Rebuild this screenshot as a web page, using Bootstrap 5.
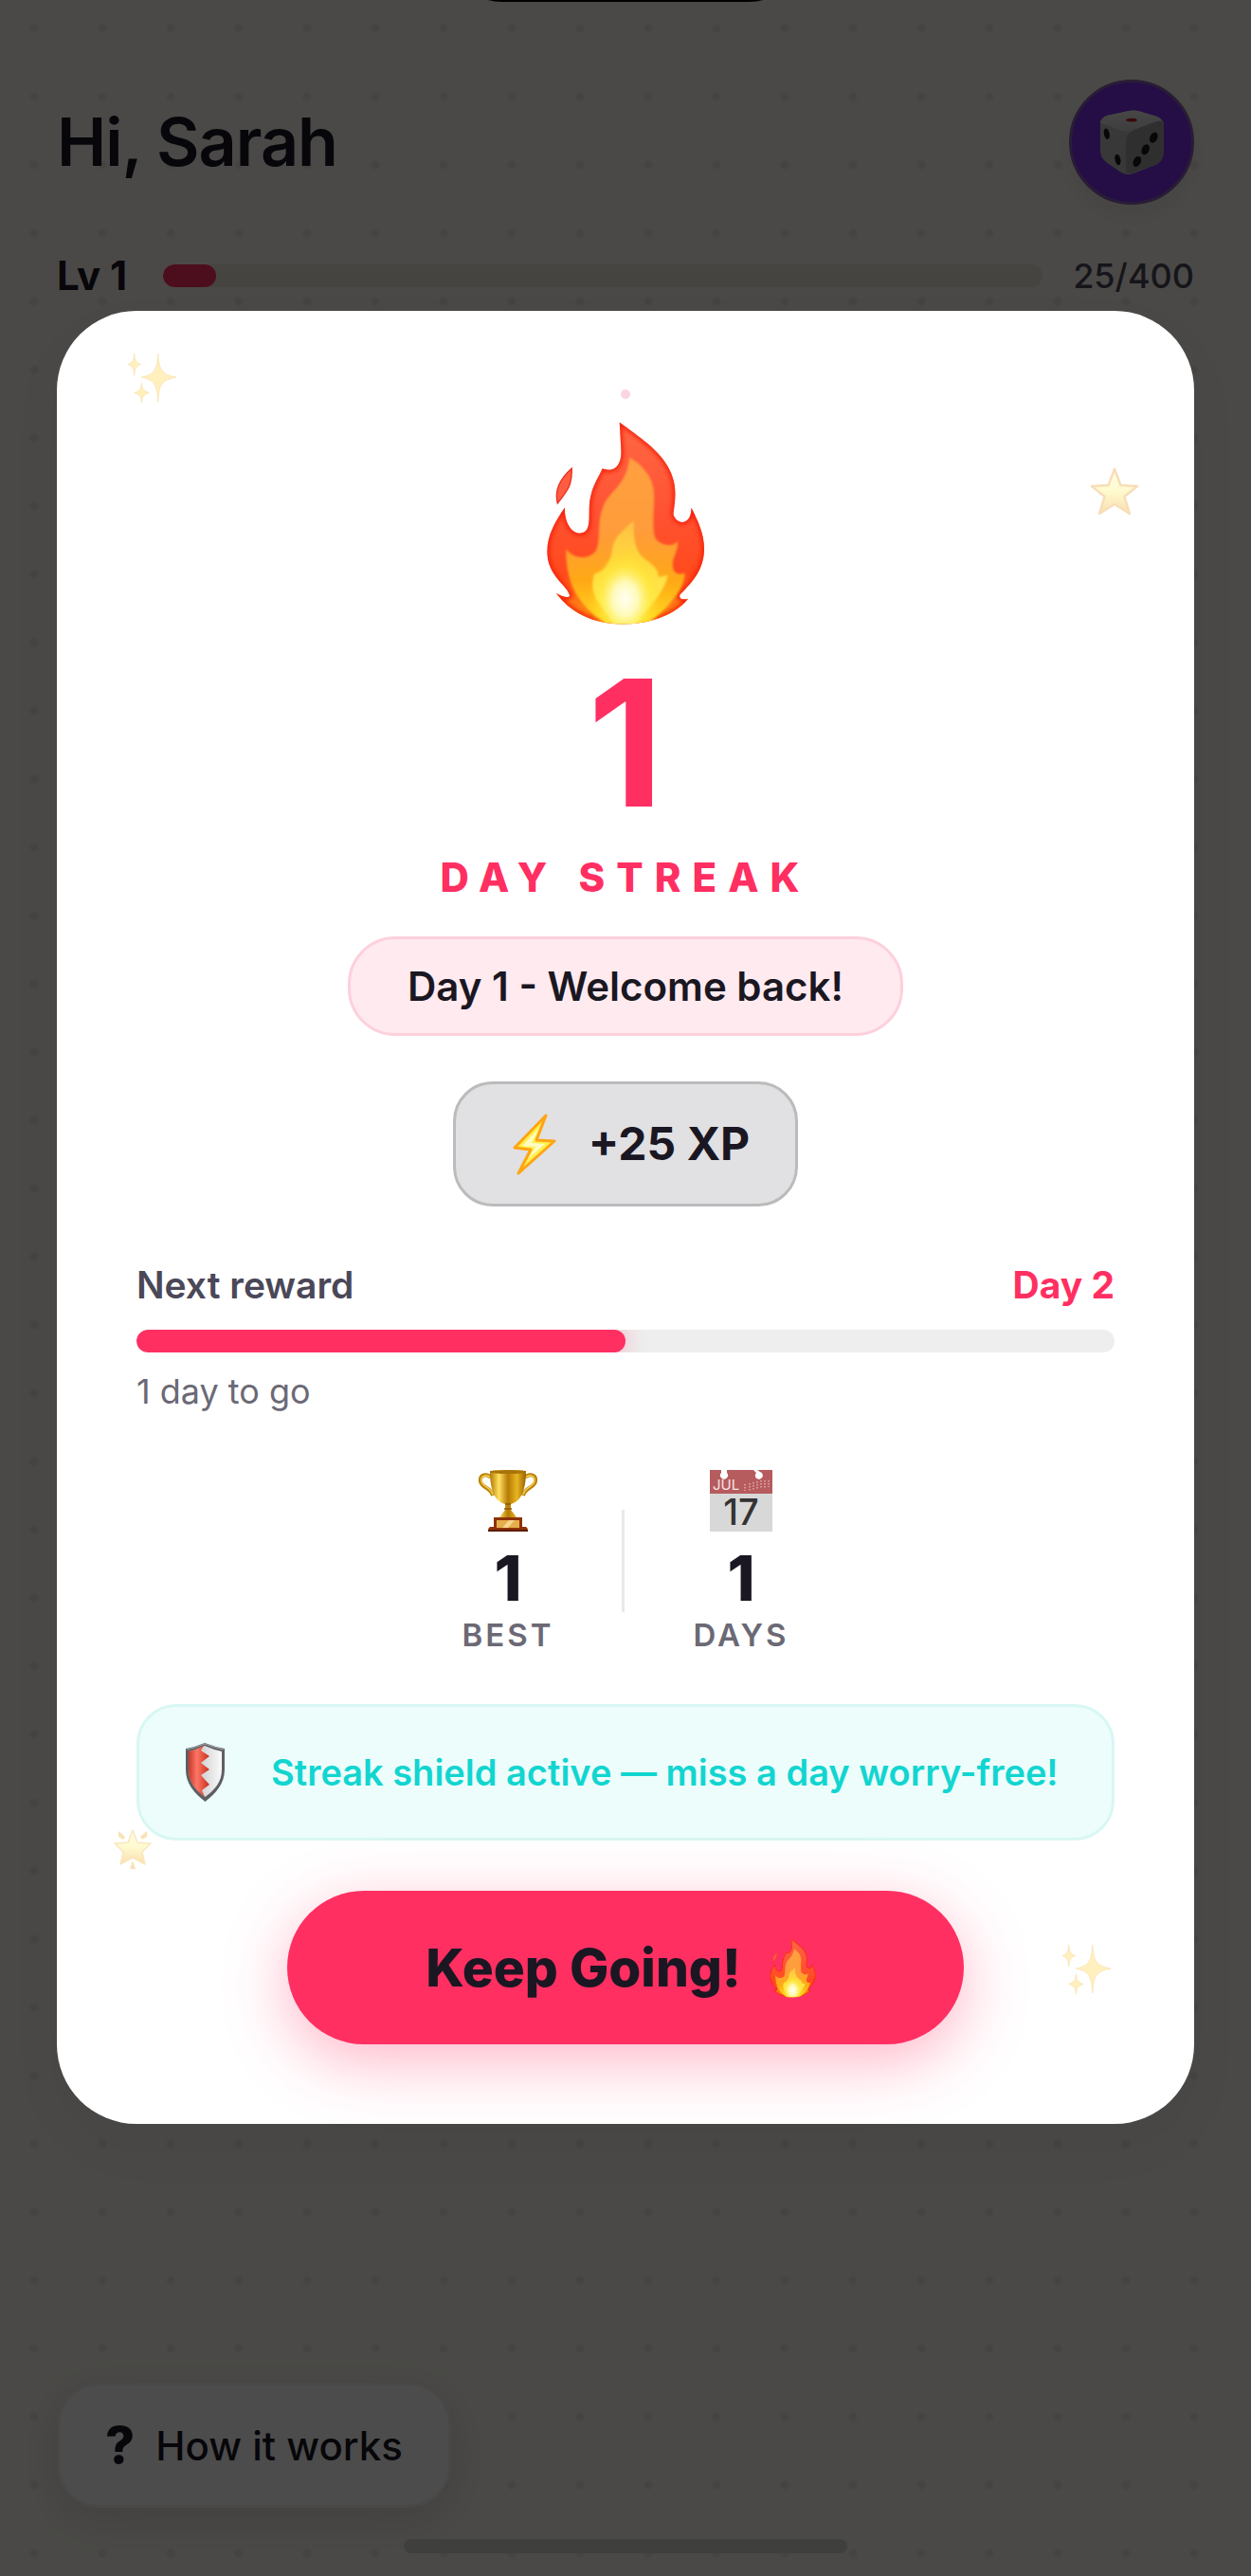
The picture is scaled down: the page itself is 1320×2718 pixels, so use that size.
<!DOCTYPE html>
<html lang="en">
<head>
<meta charset="utf-8">
<meta name="viewport" content="width=device-width, initial-scale=1">
<title>Daily streak</title>
<link rel="stylesheet" href="https://cdn.jsdelivr.net/npm/bootstrap@5.3.0/dist/css/bootstrap.min.css">
<style>
  :root { --ink: #1a1722; --hot: #ff2f62; --muted-ink: #6b6975; }
  body { font-family: Inter, "Liberation Sans", sans-serif; color: var(--ink); background: #f8f5ee; }
  .stack { display: grid; min-height: 100vh; position: relative; overflow: hidden; }
  .stack > .layer { grid-area: 1 / 1; min-width: 0; }

  /* Home screen */
  .home { padding: 84px 60px 72px; background: radial-gradient(circle at 36px 36px, #e9e5de 3px, transparent 6px) 0 -6px / 72px 72px; }
  .hello { font-size: 70px; line-height: 84px; font-weight: 600; letter-spacing: -1px; }
  .avatar-btn { width: 132px; height: 132px; background: #7c2fe6; border: 3px solid #8a62b4; box-shadow: 0 12px 24px rgba(0,0,0,.06); }
  .avatar-btn svg { width: 70px; height: 70px; }
  .level-row { gap: 32px; margin-top: 51px; line-height: 48px; }
  .level-name { font-size: 42px; font-weight: 700; min-width: 80px; }
  .level-xp { font-size: 36px; font-weight: 500; color: #4a4858; }
  .bar { height: 24px; border-radius: 12px; background: #eee; }
  .bar .progress-bar { border-radius: 12px; background: var(--hot); box-shadow: 0 0 24px rgba(255,47,98,.4); overflow: visible; }
  .level-row .bar { background: #ebe4d8; }
  .level-row .progress-bar { box-shadow: none; }
  .help-btn { gap: 22px; height: 132px; padding: 0 48px; border: 3px solid #f4f1ec; border-radius: 45px; background: #fff; color: var(--ink); font-size: 42px; font-weight: 500; box-shadow: 0 12px 48px rgba(0,0,0,.13); }
  .help-mark { font-size: 54px; font-weight: 800; line-height: 60px; }

  /* Dialog */
  .veil { background: rgba(0,0,0,.7); padding: 328px 60px 84px; }
  .streak-card { position: relative; background: #fff; border-radius: 84px; padding: 116px 84px 84px; box-shadow: 0 24px 60px rgba(0,0,0,.04); }
  .ember { width: 10px; height: 10px; background: #fad5e0; top: 83px; left: 50%; translate: -50%; }
  .hero-flame { width: 168px; height: 216px; }
  .streak-num { font-size: 186px; line-height: 192px; font-weight: 700; color: var(--hot); margin-top: 28px; }
  .streak-label { font-size: 42px; line-height: 48px; font-weight: 800; letter-spacing: 12px; color: var(--hot); margin-top: 22px; }
  .pill-msg { padding: 24px 60px; line-height: 51px; font-size: 42px; font-weight: 600; background: #ffeaef; border: 3px solid #fdd0dc; border-radius: 50px; margin-top: 38px; }
  .pill-xp { gap: 24px; padding: 0 48px; height: 132px; font-size: 48px; font-weight: 700; background: #e1e0e3; border: 3px solid #bbb; border-radius: 42px; margin-top: 48px; }
  .pill-xp svg { width: 68px; height: 68px; }
  .reward { margin-top: 59px; }
  .reward-head { font-size: 39px; line-height: 48px; font-weight: 600; color: #4a4858; }
  .reward-day { font-weight: 700; color: var(--hot); }
  .reward .bar { margin: 23px 0 20px; }
  .reward-note { font-size: 36px; line-height: 42px; color: var(--muted-ink); }
  .stats { gap: 72px; margin-top: 61px; }
  .stats .rule { width: 3px; height: 108px; background: #e9e9eb; }
  .stat svg { width: 66px; height: 66px; }
  .stat-num { font-size: 66px; line-height: 72px; font-weight: 800; margin-top: 13px; }
  .stat-name { font-size: 33px; line-height: 36px; font-weight: 600; letter-spacing: 3px; color: var(--muted-ink); margin-top: 6px; }
  .shield-note { gap: 48px; height: 144px; padding: 0 24px 0 48px; background: #edfdfc; border: 3px solid #d8f7f3; border-radius: 42px; color: #12d5d0; font-size: 38px; font-weight: 600; margin-top: 55px; }
  .shield-note svg { flex: none; width: 43px; height: 64px; }
  .go-btn { gap: 30px; height: 162px; padding: 0 156px 0 146px; border: 0; border-radius: 81px; background: var(--hot); color: var(--ink); font-size: 55px; font-weight: 800; margin-top: 53px; box-shadow: 0 18px 66px rgba(255,47,98,.35); }
  .go-btn svg { width: 49px; height: 63px; }
  .go-btn:hover, .go-btn:focus { background: #f0265a; color: var(--ink); }

  /* Decorations floating over the dialog */
  .twinkle { position: absolute; opacity: .36; }
  .tw-a { left: 74px; top: 44px; width: 54px; height: 54px; }
  .tw-b { right: 57px; top: 164px; width: 54px; height: 54px; }
  .tw-c { left: 59px; bottom: 268px; width: 42px; height: 44px; }
  .tw-d { right: 86px; bottom: 136px; width: 54px; height: 54px; }

  /* Device chrome */
  .island { width: 372px; height: 111px; top: -109px; left: 50%; translate: -50%; border-radius: 56px; }
  .home-bar { width: 468px; height: 15px; bottom: 24px; left: 50%; translate: -50%; border-radius: 8px; background: #3f3f3e; }
</style>
</head>
<body>
<svg class="position-absolute" width="0" height="0" aria-hidden="true">
  <defs>
    <linearGradient id="fOut" x1="0" y1="0" x2="0" y2="1"><stop offset="0" stop-color="#ff6844"/><stop offset=".45" stop-color="#ff5233"/><stop offset=".75" stop-color="#ff4a1c"/><stop offset="1" stop-color="#ff9a12"/></linearGradient>
    <linearGradient id="fMid" x1="0" y1="0" x2="0" y2="1"><stop offset="0" stop-color="#ffa040"/><stop offset=".45" stop-color="#ff9c3a"/><stop offset=".75" stop-color="#ffa916"/><stop offset="1" stop-color="#ffdc20"/></linearGradient>
    <linearGradient id="fIn" x1="0" y1="0" x2="0" y2="1"><stop offset="0" stop-color="#ffbe45"/><stop offset=".4" stop-color="#ffda3c"/><stop offset="1" stop-color="#fff25a"/></linearGradient>
    <radialGradient id="fGlow"><stop offset="0" stop-color="#fffff4"/><stop offset=".35" stop-color="#fffbc0" stop-opacity=".95"/><stop offset=".7" stop-color="#ffec40" stop-opacity=".5"/><stop offset="1" stop-color="#ffd820" stop-opacity="0"/></radialGradient>
    <filter id="soft" x="-10%" y="-10%" width="120%" height="120%"><feGaussianBlur stdDeviation="7"/></filter>
    <filter id="soft2" x="-10%" y="-10%" width="120%" height="120%"><feGaussianBlur stdDeviation="3"/></filter>
    <path id="fShape" d="M342 163C405 210 470 252 500 312C528 366 518 415 513 455C520 490 572 495 570 434C590 475 611 515 611 565C611 630 575 670 535 710C528 722 540 730 560 724C525 770 450 802 360 805C250 805 185 765 140 706C160 718 178 722 184 716C178 680 113 655 112 575C112 520 140 475 168 434C166 480 190 518 218 516C260 512 238 450 250 400C258 360 275 340 288 310C325 325 350 300 347 250Z"/>
    <clipPath id="fClip"><use href="#fShape"/></clipPath>
    <linearGradient id="gold"><stop offset="0" stop-color="#b47800"/><stop offset=".25" stop-color="#ffe060"/><stop offset=".5" stop-color="#b57a05"/><stop offset=".75" stop-color="#e8b520"/><stop offset="1" stop-color="#9a6200"/></linearGradient>
    <linearGradient id="starFill" x1="0" y1="0" x2="0" y2="1"><stop offset="0" stop-color="#fff6c0"/><stop offset=".5" stop-color="#fff37a"/><stop offset="1" stop-color="#f0a528"/></linearGradient>
    <linearGradient id="steel"><stop offset="0" stop-color="#b9b9bd"/><stop offset="1" stop-color="#fafafa"/></linearGradient>
    <linearGradient id="redEn"><stop offset="0" stop-color="#c93a2c"/><stop offset=".4" stop-color="#ff7565"/><stop offset="1" stop-color="#c4301c"/></linearGradient>
    <linearGradient id="dieTop" x1="0" y1="0" x2="0" y2="1"><stop offset="0" stop-color="#ededed"/><stop offset="1" stop-color="#cfcfcf"/></linearGradient>
  </defs>
  <symbol id="flame" viewBox="108 160 506 648">
    <use href="#fShape" fill="url(#fOut)"/>
    <path d="M190 310C192 362 178 380 145 421C136 385 145 350 190 310Z" fill="#ff5c40" stroke="#e93020" stroke-width="4"/>
    <g clip-path="url(#fClip)">
      <use href="#fShape" fill="none" stroke="#f4200a" stroke-width="14" filter="url(#soft)"/>
      <path filter="url(#soft2)" d="M374 275C430 310 452 350 452 400C452 440 445 500 455 530C475 560 520 560 527 538C530 580 500 600 515 635C525 650 545 645 550 642C548 700 480 770 430 802L300 802C215 750 170 680 172 565C190 595 245 605 268 570C285 530 265 470 300 410C330 370 366 350 374 275Z" fill="url(#fMid)"/>
      <path filter="url(#soft2)" d="M388 475C385 540 392 575 425 600C450 618 468 635 465 655C480 652 492 650 495 648C490 700 425 760 395 805H325C290 750 240 715 262 645C290 640 305 620 318 580C320 530 350 510 388 475Z" fill="url(#fIn)"/>
      <ellipse cx="360" cy="725" rx="115" ry="150" fill="url(#fGlow)"/>
    </g>
  </symbol>
  <symbol id="sparkles" viewBox="0 0 56 56">
    <g fill="#ffd84e" stroke="#f3b63c" stroke-width="1">
      <path d="M34 1C35 19 38 24 54 27C38 30 35 35 34 54C33 35 30 30 16 27C30 24 33 19 34 1Z"/>
      <path d="M8 1C8.500 9 10 11 15 13C10 15 8.500 17 8 25C7.500 17 6 15 1 13C6 11 7.500 9 8 1Z"/>
      <path d="M16 33C16.500 40 18 42 24 44C18 46 16.500 48 16 55C15.500 48 14 46 8 44C14 42 15.500 40 16 33Z"/>
    </g>
  </symbol>
  <symbol id="star" viewBox="0 0 54 54"><path d="M27 3L33.500 20L51 21L37.500 32L43 50L27 40L11 50L16.500 32L3 21L20.500 20Z" fill="url(#starFill)" stroke="#e8a63c" stroke-width="2.500" stroke-linejoin="round"/></symbol>
  <symbol id="glowstar" viewBox="0 0 42 44">
    <path d="M21 2L26 15L40 16L31 25L34 38L21 31L8 38L11 25L2 16L16 15Z" fill="url(#starFill)" stroke="#f0bd4c" stroke-width="1.500" stroke-linejoin="round"/>
    <path d="M6 3L13 9L11 12L6 9ZM36 3L29 9L31 12L36 9ZM21 34L24 43H18Z" fill="#f0b030"/>
  </symbol>
</svg>

<div class="stack">
  <main class="layer home d-flex flex-column">
    <header>
      <div class="d-flex justify-content-between align-items-center">
        <h1 class="hello m-0">Hi, Sarah</h1>
        <button type="button" class="avatar-btn rounded-circle d-flex align-items-center justify-content-center p-0" aria-label="Profile">
          <svg viewBox="0 0 72 72" aria-hidden="true">
            <path d="M2 17Q2 9 10 7L33 2Q38 1 43 2L63 8Q71 11 71 17V46Q71 54 64 60L38 70Q30 73 23 68L9 58Q2 53 2 45Z" fill="#bcbcbc"/>
            <path d="M2 15Q3 9 10 7L33 2Q38 1 43 2L63 8Q70 11 68 14L39 23Q31 26 23 23Z" fill="url(#dieTop)"/>
            <path d="M30 35Q30 26 40 22L64 13Q71 12 71 18V46Q71 54 64 60L38 69Q30 72 30 65Z" fill="#9d9d9d"/>
            <ellipse cx="36" cy="12" rx="6" ry="2" fill="#c11c28"/>
            <g fill="#191919"><ellipse cx="9" cy="27" rx="3" ry="6" transform="rotate(-12 9 27)"/><ellipse cx="21" cy="55" rx="3" ry="6" transform="rotate(-12 21 55)"/><ellipse cx="60" cy="31" rx="4" ry="6" transform="rotate(25 60 31)"/><ellipse cx="51" cy="44" rx="4" ry="6" transform="rotate(25 51 44)"/><ellipse cx="42" cy="57" rx="4" ry="6" transform="rotate(25 42 57)"/></g>
          </svg>
        </button>
      </div>
      <div class="level-row d-flex align-items-center">
        <span class="level-name">Lv 1</span>
        <div class="progress bar flex-grow-1" role="progressbar" aria-label="Experience" aria-valuenow="25" aria-valuemin="0" aria-valuemax="400">
          <div class="progress-bar" style="width: 6%"></div>
        </div>
        <span class="level-xp">25/400</span>
      </div>
    </header>
    <footer class="mt-auto">
      <button type="button" class="help-btn d-inline-flex align-items-center">
        <span class="help-mark">?</span><span>How it works</span>
      </button>
    </footer>
  </main>

  <div class="layer veil">
    <section class="streak-card d-flex flex-column align-items-center" role="dialog" aria-modal="true" aria-labelledby="streak-title">
      <span class="ember position-absolute rounded-circle"></span>
      <svg class="twinkle tw-a" aria-hidden="true"><use href="#sparkles"/></svg>
      <svg class="twinkle tw-b" aria-hidden="true"><use href="#star"/></svg>
      <svg class="twinkle tw-c" aria-hidden="true"><use href="#glowstar"/></svg>
      <svg class="twinkle tw-d" aria-hidden="true"><use href="#sparkles"/></svg>

      <svg class="hero-flame" aria-hidden="true"><use href="#flame"/></svg>
      <div class="streak-num">1</div>
      <h2 class="streak-label mb-0" id="streak-title">DAY STREAK</h2>
      <div class="pill-msg">Day 1 - Welcome back!</div>
      <div class="pill-xp d-flex align-items-center">
        <svg viewBox="0 0 68 68" aria-hidden="true"><path d="M47 4L14 38L31 40L18 65L56 31L37 30Z" fill="#fff04e" stroke="#ffa512" stroke-width="3" stroke-linejoin="round"/><path d="M40 17L22 36L36 37L28 50L46 34L32 33Z" fill="#fffcc4"/></svg>
        <span>+25 XP</span>
      </div>

      <div class="reward w-100">
        <div class="reward-head d-flex justify-content-between"><span>Next reward</span><span class="reward-day">Day 2</span></div>
        <div class="progress bar" role="progressbar" aria-label="Next reward" aria-valuenow="50" aria-valuemin="0" aria-valuemax="100">
          <div class="progress-bar" style="width: 50%"></div>
        </div>
        <div class="reward-note">1 day to go</div>
      </div>

      <div class="stats d-flex align-items-center">
        <div class="stat d-flex flex-column align-items-center">
          <svg viewBox="0 0 66 66" aria-hidden="true">
            <g fill="none" stroke="#b9820a" stroke-width="4"><path d="M15 9C11 4 3 6 4 13C5 20 15 19 17 28"/><path d="M51 9C55 4 63 6 62 13C61 20 51 19 49 28"/></g>
            <g fill="none" stroke="#f6cf4c" stroke-width="1.500"><path d="M14 9C11 5 4 7 5 13C6 19 15 19 17 27"/><path d="M52 9C55 5 62 7 61 13C60 19 51 19 49 27"/></g>
            <path d="M14 2Q33 0 52 2C52 20 48 34 36 37V43L42 51H24L30 43V37C18 34 14 20 14 2Z" fill="url(#gold)"/>
            <ellipse cx="33" cy="3" rx="19" ry="2" fill="#a87408"/>
            <path d="M30 37H36M29 42H37" stroke="#8a5800" stroke-width="1.500"/>
            <path d="M18 51H48V61H52Q54 62 54 65H12Q12 62 14 61H18Z" fill="#8e3208"/>
            <path d="M12 64H54V66H12Z" fill="#5d1c00"/><path d="M21 54H45V62H21Z" fill="#e6ad4c"/><path d="M27 62L34 54H40L33 62Z" fill="#f9d78a"/>
          </svg>
          <div class="stat-num">1</div>
          <div class="stat-name">BEST</div>
        </div>
        <div class="rule"></div>
        <div class="stat d-flex flex-column align-items-center">
          <svg viewBox="0 0 66 66" aria-hidden="true">
            <path d="M0 1H66V66H0Z" fill="#d8d8d8"/><path d="M0 1H66V26H0Z" fill="#b65b5e"/>
            <path d="M12 1H18V4A4 4 0 1 1 12 4ZM46 1L49 4A4 4 0 1 0 53 3L50 1Z" fill="#fff"/>
            <text x="3" y="22" font-size="15" fill="#f5e4e4" font-family="Inter, sans-serif">JUL</text>
            <path d="M37 16V23M42 15V23M46 14V23M50 13V21M54 12V21M58 12V21M62 12V19" stroke="#d59a9c" stroke-width="2" stroke-dasharray="1.500 1.500"/>
            <text x="33" y="59" font-size="38" text-anchor="middle" fill="#333" font-weight="500" font-family="Inter, sans-serif">17</text>
          </svg>
          <div class="stat-num">1</div>
          <div class="stat-name">DAYS</div>
        </div>
      </div>

      <div class="shield-note w-100 d-flex align-items-center">
        <svg viewBox="0 0 43 64" aria-hidden="true">
          <path d="M1 7Q12 5 21 1Q31 5 42 7V29C42 44 33 54 21.500 63C10 54 1 44 1 29Z" fill="#5e5f63"/>
          <path d="M4 10Q13 8 21 4Q30 8 39 10V29C39 42 32 50 21.500 58C11 50 4 42 4 29Z" fill="url(#steel)"/>
          <path d="M4 10Q13 8 20 4L17 9L26 15L17 22L26 29L17 35L26 45L18 51L21 58C11 50 4 42 4 29Z" fill="url(#redEn)"/>
          <path d="M2 8Q12 6 21 2Q31 6 41 8" fill="none" stroke="#a5a6aa"/>
        </svg>
        <span>Streak shield active — miss a day worry-free!</span>
      </div>

      <button type="button" class="go-btn btn d-inline-flex align-items-center"><span>Keep Going!</span><svg aria-hidden="true"><use href="#flame"/></svg></button>
    </section>
  </div>

  <div class="island position-absolute bg-black"></div>
  <div class="home-bar position-absolute"></div>
</div>
<script src="https://cdn.jsdelivr.net/npm/bootstrap@5.3.0/dist/js/bootstrap.bundle.min.js"></script>
</body>
</html>
